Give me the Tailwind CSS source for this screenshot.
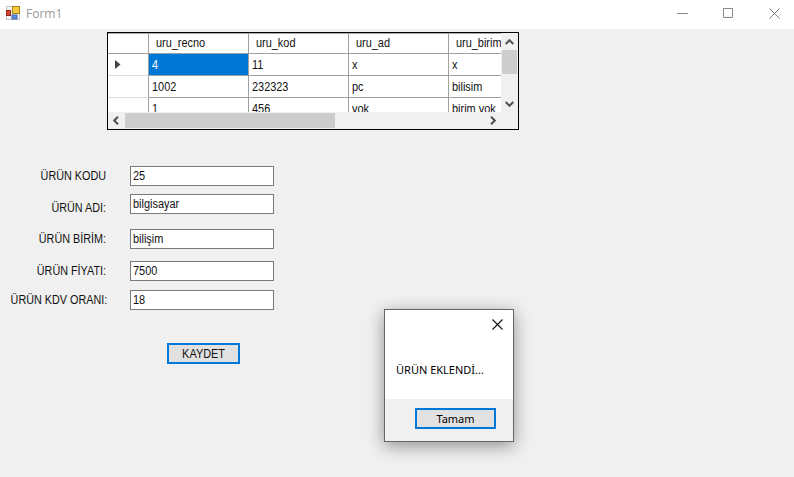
<!DOCTYPE html>
<html lang="tr">
<head>
<meta charset="utf-8">
<title>Form1</title>
<script src="https://cdn.jsdelivr.net/npm/@tailwindcss/browser@4"></script>
</head>
<body class="w-[794px] h-[477px] overflow-hidden bg-[#f0f0f0] font-['Liberation_Sans',sans-serif] text-[12px] leading-[14px] text-[#111]">
<header class="flex h-[29px] items-center bg-white pl-[6px] pb-[2px]">
  <svg width="15" height="15" viewBox="0 0 15 15">
    <rect x=".5" y=".5" width="13" height="13" fill="#f4f4f4" stroke="#c4c8cf"/>
    <rect x="6.5" y=".5" width="7" height="7" fill="#f5c93b" stroke="#a88319"/>
    <rect x=".5" y="4.500" width="4" height="5" fill="#d84830" stroke="#8f2418"/>
    <rect x="6" y="9" width="5" height="4" fill="#5b8ee0" stroke="#4468b0"/>
  </svg>
  <span class="ml-[5px] font-['Open_Sans',sans-serif] text-[12px] text-[#999]">Form1</span>
  <div class="ml-auto mr-[14px] flex gap-[35px]">
    <svg width="11" height="11" fill="none" stroke="#888"><path d="M0 5.500h11"/></svg>
    <svg width="11" height="11" fill="none" stroke="#888"><path d="M.5.5h9v9h-9z"/></svg>
    <svg width="11" height="11" fill="none" stroke="#777"><path d="M.5.5l10 10M10.500.5l-10 10"/></svg>
  </div>
</header>

<section class="mt-[3px] ml-[107px] flex h-[98px] w-[412px] flex-col border border-black bg-[#f0f0f0]">
  <div class="flex h-[79px]">
    <div class="h-[79px] w-[393px] overflow-hidden border-t border-[#aaa] bg-white">
      <div class="grid w-[441px] grid-cols-[41px_100px_100px_100px_100px] auto-rows-[22px] [&>div]:border-r [&>div]:border-b [&>div]:border-[#a0a0a0] [&>div]:pl-[3px] [&>div]:pt-[4px] [&_span]:inline-block [&_span]:origin-left [&_span]:scale-x-[.91] -mt-[2px]">
        <div></div><div><span class="ml-[4px]">uru_recno</span></div><div><span class="ml-[4px]">uru_kod</span></div><div><span class="ml-[4px]">uru_ad</span></div><div><span class="ml-[4px]">uru_birim</span></div>
        <div class="border-b-[#ddd]!"><svg class="ml-[4px] mt-[2px]" width="6" height="10"><path d="M0 0l5.500 4.500L0 9z" fill="#444"/></svg></div><div class="bg-[#0078d7] text-white"><span>4</span></div><div><span>11</span></div><div><span>x</span></div><div><span>x</span></div>
        <div class="border-b-[#ddd]!"></div><div><span>1002</span></div><div><span>232323</span></div><div><span>pc</span></div><div><span>bilisim</span></div>
        <div></div><div><span>1</span></div><div><span>456</span></div><div><span>yok</span></div><div><span>birim yok</span></div>
      </div>
    </div>
    <div class="flex w-[17px] flex-col items-center justify-between pt-[6px] pb-[5px]">
      <svg width="9" height="6" fill="none" stroke="#505050" stroke-width="2"><path d="M.7 5l3.800-3.800L8.300 5"/></svg>
      <div class="-mt-[22px] h-[24px] w-[15px] bg-[#cdcdcd]"></div>
      <svg width="9" height="6" fill="none" stroke="#505050" stroke-width="2"><path d="M.7 1l3.800 3.800L8.300 1"/></svg>
    </div>
  </div>
  <div class="flex h-[17px] items-center">
    <svg class="ml-[5px]" width="6" height="9" fill="none" stroke="#505050" stroke-width="2"><path d="M5 .7L1.200 4.500 5 8.300"/></svg>
    <div class="ml-[6px] h-[15px] w-[210px] bg-[#cdcdcd]"></div>
    <svg class="ml-[155px]" width="6" height="9" fill="none" stroke="#505050" stroke-width="2"><path d="M1 .7l3.800 3.800L1 8.300"/></svg>
  </div>
</section>

<main class="mt-[36px] w-[274px] [&_label]:w-[106px] [&_label]:text-right [&_label]:whitespace-nowrap [&_label]:origin-right [&_label]:scale-x-[.9] [&_p]:ml-[24px] [&_p]:h-[20px] [&_p]:w-[144px] [&_p]:border [&_p]:border-[#7a7a7a] [&_p]:bg-white [&_p]:pl-[2px] [&_p]:pt-[2px] [&_span]:inline-block [&_span]:origin-left [&_span]:scale-x-[.91]">
  <div class="flex items-center"><label>ÜRÜN KODU</label><p><span>25</span></p></div>
  <div class="mt-[8px] flex items-start"><label class="mt-[7px]">ÜRÜN ADI:</label><p><span>bilgisayar</span></p></div>
  <div class="mt-[14px] flex items-center"><label>ÜRÜN BİRİM:</label><p><span>bilişim</span></p></div>
  <div class="mt-[12px] flex items-center"><label>ÜRÜN FİYATI:</label><p><span>7500</span></p></div>
  <div class="mt-[9px] flex items-center"><label>ÜRÜN KDV ORANI:</label><p><span>18</span></p></div>
  <button class="mt-[33px] ml-[167px] flex h-[21px] w-[73px] items-center justify-center border-2 border-[#0078d7] bg-[#e1e1e1]"><span class="origin-center!">KAYDET</span></button>
</main>

<div class="absolute top-[309px] left-[384px] flex h-[133px] w-[130px] flex-col border border-[#666] bg-white font-['Noto_Sans',sans-serif] text-[11px] text-black shadow-[0_4px_16px_rgba(0,0,0,0.4)]">
  <div class="flex justify-end pt-[9px] pr-[10px]"><svg width="11" height="11" fill="none" stroke="#111" stroke-width="1.100"><path d="M.5.5l10 10M10.500.5l-10 10"/></svg></div>
  <p class="mt-[33px] ml-[11px] origin-left whitespace-nowrap">ÜRÜN EKLENDİ...</p>
  <div class="mt-auto flex h-[42px] items-start justify-end bg-[#f0f0f0] pt-[9px] pr-[17px]">
    <button class="flex h-[21px] w-[81px] items-center justify-center border-2 border-[#0078d7] bg-[#e1e1e1]">Tamam</button>
  </div>
</div>
</body>
</html>
